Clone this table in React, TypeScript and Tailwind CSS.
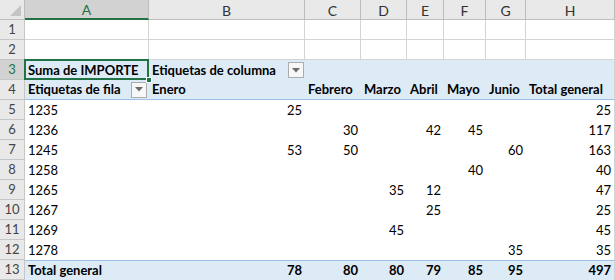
import React from 'react'

type Row = {
  n: number
  label: string
  vals: (number | null)[] // B..H
}

const COLS = ['A', 'B', 'C', 'D', 'E', 'F', 'G', 'H']
const GRID = 'grid grid-cols-[25px_124px_156px_56px_46px_37px_42px_40px_89px]'

const rows: Row[] = [
  { n: 5, label: '1235', vals: [25, null, null, null, null, null, 25] },
  { n: 6, label: '1236', vals: [null, 30, null, 42, 45, null, 117] },
  { n: 7, label: '1245', vals: [53, 50, null, null, null, 60, 163] },
  { n: 8, label: '1258', vals: [null, null, null, null, 40, null, 40] },
  { n: 9, label: '1265', vals: [null, null, 35, 12, null, null, 47] },
  { n: 10, label: '1267', vals: [null, null, null, 25, null, null, 25] },
  { n: 11, label: '1269', vals: [null, null, 45, null, null, null, 45] },
  { n: 12, label: '1278', vals: [null, null, null, null, null, 35, 35] },
]

const months = ['Enero', 'Febrero', 'Marzo', 'Abril', 'Mayo', 'Junio', 'Total general']
const totals = [78, 80, 80, 79, 85, 95, 497]

const DropButton = () => (
  <span className="flex h-[16px] w-[16px] shrink-0 items-center justify-center border border-[#acacac] bg-[#f7f7f7]">
    <svg width="8" height="5" viewBox="0 0 8 5">
      <path d="M0 0h8L4 4.5z" fill="#6b6b6b" />
    </svg>
  </span>
)

const RowHead = ({ n, active }: { n: number; active?: boolean }) => (
  <div
    className={`flex items-center justify-center border-r border-b border-[#c6c6c6] text-[13px] ${
      active ? 'bg-[#d2d2d2] text-[#217346]' : 'bg-[#e9e9e9] text-[#444]'
    }`}
  >
    {n}
  </div>
)

export default function App() {
  return (
    <div className="h-[280px] w-[615px] overflow-hidden bg-white font-['Lato','Liberation_Sans',sans-serif] text-[13px] leading-none text-black">
      {/* column letters */}
      <div className={`${GRID} h-[20px]`}>
        <div className="relative border-r border-b border-[#bdbdbd] bg-[#e9e9e9]">
          <svg className="absolute right-[3px] bottom-[3px]" width="11" height="11" viewBox="0 0 11 11">
            <path d="M11 0v11H0z" fill="#c4c4c4" />
          </svg>
        </div>
        {COLS.map((c) =>
          c === 'A' ? (
            <div
              key={c}
              className="flex items-center justify-center border-r border-b-2 border-r-[#bdbdbd] border-b-[#217346] bg-[#d2d2d2] pt-[2px] text-[14px] text-[#217346]"
            >
              {c}
            </div>
          ) : (
            <div
              key={c}
              className="flex items-center justify-center border-r border-b border-[#bdbdbd] bg-[#e9e9e9] pt-[2px] text-[14px] text-[#333]"
            >
              {c}
            </div>
          )
        )}
      </div>

      {/* empty rows 1-2 */}
      {[1, 2].map((n) => (
        <div key={n} className={`${GRID} h-[20px]`}>
          <RowHead n={n} />
          {COLS.map((c) => (
            <div key={c} className="border-r border-b border-[#d4d4d4]" />
          ))}
        </div>
      ))}

      {/* row 3: pivot header */}
      <div className={`${GRID} h-[20px]`}>
        <RowHead n={3} active />
        <div className="relative flex items-center bg-[#ddebf7] pl-[3px] font-bold">
          Suma de IMPORTE
          <div className="absolute inset-0 -left-[1px] -top-[1px] border-2 border-[#217346]" />
          <div className="absolute -right-[3px] -bottom-[3px] h-[6px] w-[6px] border border-white bg-[#217346]" />
        </div>
        <div className="flex items-center justify-between bg-[#ddebf7] pr-[1px] pl-[3px] font-bold">
          <span>Etiquetas de columna</span>
          <DropButton />
        </div>
        {COLS.slice(2).map((c, i) => (
          <div
            key={c}
            className={`bg-[#ddebf7] ${i === 5 ? 'border-r border-[#d4d4d4]' : ''}`}
          />
        ))}
      </div>

      {/* row 4: month headers */}
      <div className={`${GRID} h-[20px]`}>
        <RowHead n={4} />
        <div className="flex items-center justify-between border-b border-[#9bc2e6] bg-[#ddebf7] pr-[2px] pl-[3px] font-bold">
          <span>Etiquetas de fila</span>
          <DropButton />
        </div>
        {months.map((m, i) => (
          <div
            key={m}
            className={`flex items-center overflow-visible border-b border-[#9bc2e6] bg-[#ddebf7] pl-[3px] font-bold whitespace-nowrap ${
              i === months.length - 1 ? 'border-r border-r-[#d4d4d4]' : ''
            }`}
          >
            {m}
          </div>
        ))}
      </div>

      {/* data rows */}
      {rows.map((r) => (
        <div key={r.n} className={`${GRID} h-[20px]`}>
          <RowHead n={r.n} />
          <div className="flex items-center pl-[3px]">{r.label}</div>
          {r.vals.map((v, i) => (
            <div
              key={i}
              className={`flex items-center justify-end pr-[3px] ${
                i === r.vals.length - 1 ? 'border-r border-[#d4d4d4]' : ''
              }`}
            >
              {v ?? ''}
            </div>
          ))}
        </div>
      ))}

      {/* grand total */}
      <div className={`${GRID} h-[20px]`}>
        <RowHead n={13} />
        <div className="flex items-center border-t border-[#9bc2e6] bg-[#ddebf7] pl-[3px] font-bold">
          Total general
        </div>
        {totals.map((t, i) => (
          <div
            key={i}
            className={`flex items-center justify-end border-t border-[#9bc2e6] bg-[#ddebf7] pr-[3px] font-bold ${
              i === totals.length - 1 ? 'border-r border-r-[#d4d4d4]' : ''
            }`}
          >
            {t}
          </div>
        ))}
      </div>
    </div>
  )
}
